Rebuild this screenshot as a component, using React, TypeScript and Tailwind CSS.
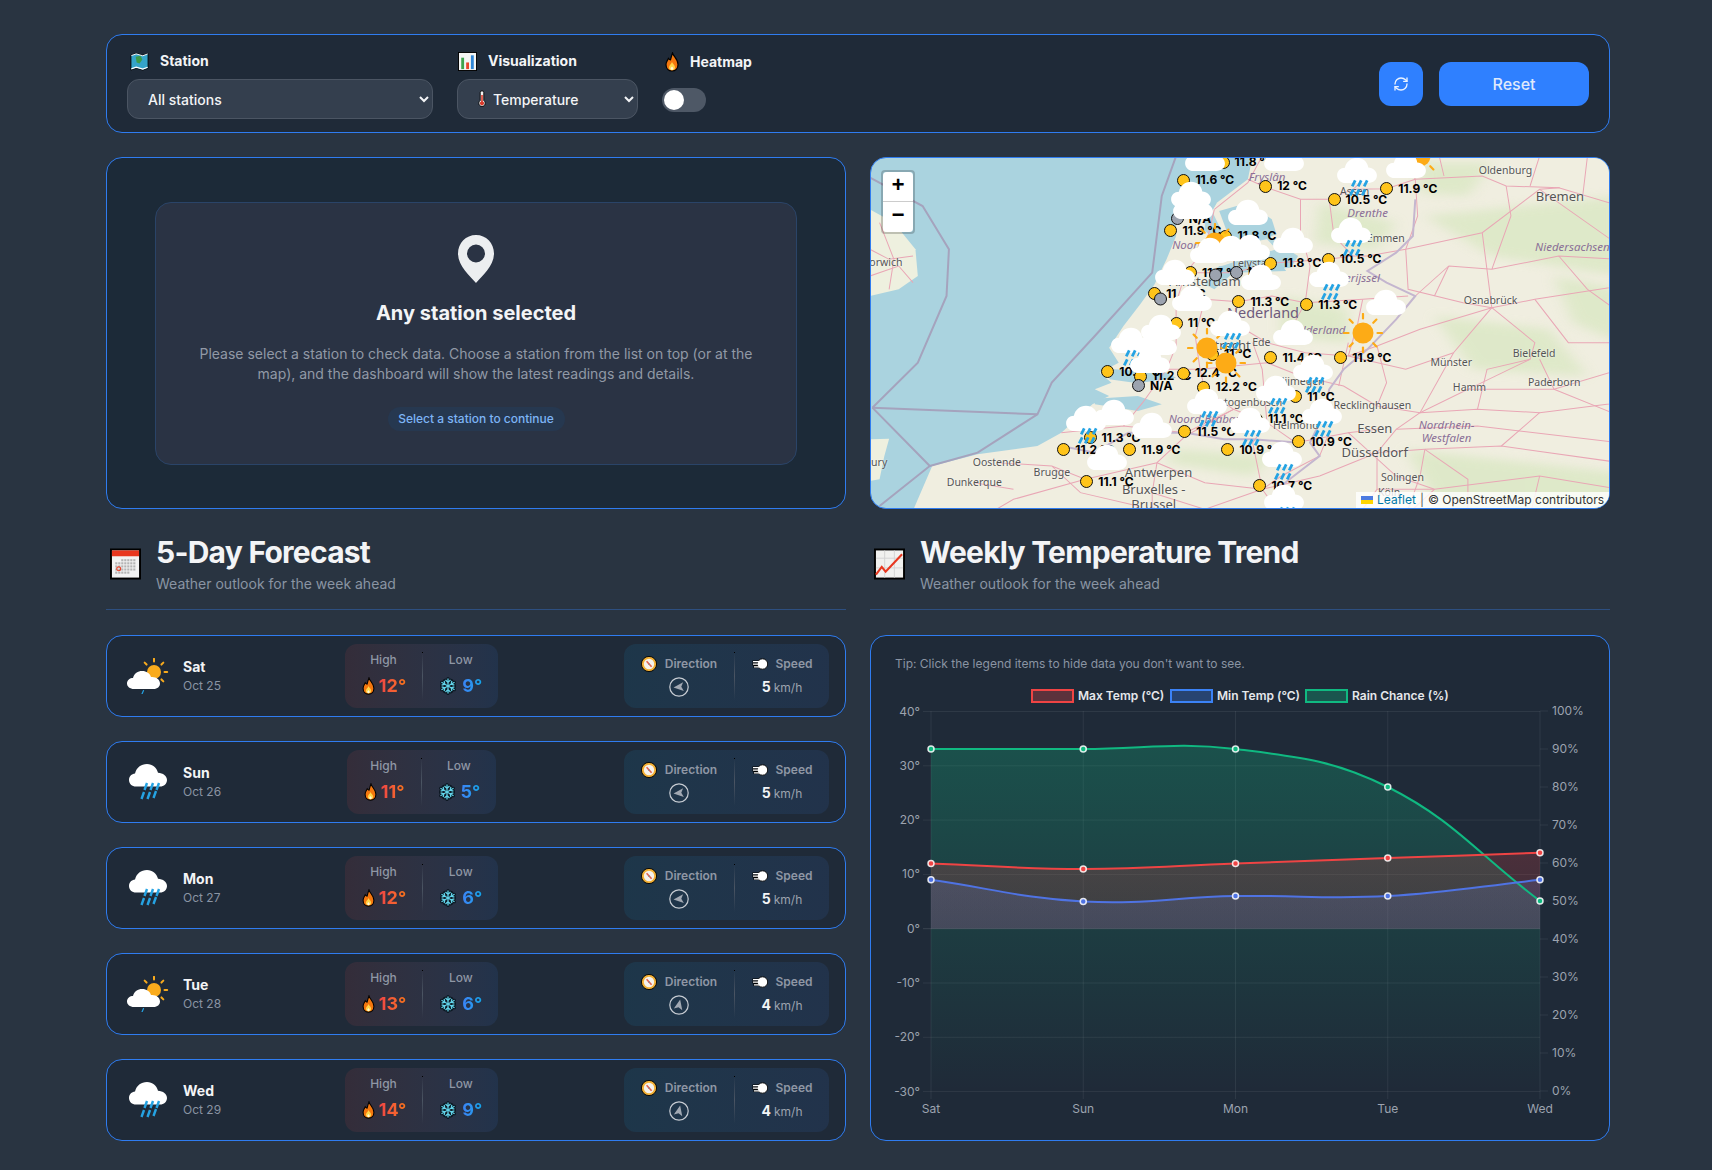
import { RefreshCw } from "lucide-react";

type Day = {
  day: string;
  date: string;
  high: number;
  low: number;
  speed: number;
  sunny: boolean;
  heading: number;
};

const days: Day[] = [
  { day: "Sat", date: "Oct 25", high: 12, low: 9, speed: 5, sunny: true, heading: -95 },
  { day: "Sun", date: "Oct 26", high: 11, low: 5, speed: 5, sunny: false, heading: -95 },
  { day: "Mon", date: "Oct 27", high: 12, low: 6, speed: 5, sunny: false, heading: -95 },
  { day: "Tue", date: "Oct 28", high: 13, low: 6, speed: 4, sunny: true, heading: 12 },
  { day: "Wed", date: "Oct 29", high: 14, low: 9, speed: 4, sunny: false, heading: 12 },
];

// map items are in a 1568x1080 grid that covers the 750x360 map box
const mx = (x: number) => x / 2.09 - 1;
const my = (y: number) => y / 3 - 2;

const stations: [number, number, string][] = [
  [738, 18, "11.8 °C"], [656, 73, "11.6 °C"], [827, 90, "12 °C"], [1080, 98, "11.9 °C"],
  [970, 131, "10.5 °C"], [642, 188, "N/A"], [629, 224, "11.9 °C"], [744, 240, "11.8 °C"],
  [838, 322, "11.8 °C"], [958, 310, "10.5 °C"], [670, 350, "11.7 °C"], [723, 356, ""],
  [766, 348, "N/A"], [595, 413, "11.4 °C"], [608, 428, ""], [771, 437, "11.3 °C"],
  [913, 446, "11.3 °C"], [640, 502, "11 °C"], [838, 605, "11.4 °C"], [984, 605, "11.9 °C"],
  [716, 594, "11 °C"], [497, 647, "10.8 °C"], [566, 660, "11.2 °C"], [655, 652, "12.4 °C"],
  [561, 689, "N/A"], [698, 694, "12.2 °C"], [890, 722, "11 °C"], [808, 790, "11.1 °C"],
  [658, 827, "11.5 °C"], [460, 845, "11.3 °C"], [405, 881, "11.2 °C"], [543, 881, "11.9 °C"],
  [748, 881, "10.9 °C"], [896, 857, "10.9 °C"], [453, 977, "11.1 °C"], [815, 989, "10.7 °C"],
];

const grayStations = [642, 723, 766, 608, 561];

const clouds: [number, number, boolean][] = [
  [700, 10, false], [865, 10, false], [1018, 45, true], [1120, 30, false], [670, 118, false],
  [675, 152, false], [790, 170, false], [885, 255, false], [1005, 225, true], [710, 285, false],
  [755, 280, false], [795, 275, false], [638, 350, false], [818, 365, false], [960, 358, true],
  [672, 430, false], [1078, 442, false], [608, 515, false], [752, 505, true], [885, 530, false],
  [545, 555, true], [600, 560, false], [585, 615, false], [925, 635, true], [848, 700, true],
  [705, 738, true], [945, 768, true], [452, 790, true], [510, 770, false], [590, 810, false],
  [795, 795, true], [862, 898, true], [495, 905, false], [866, 1025, true],
];

const suns: [number, number][] = [[705, 575], [745, 620], [1030, 530], [1150, 0], [722, 262]];

const placeLabels: [number, number, string, string][] = [
  [1328, 45, "Oldenburg", "g"], [1442, 123, "Bremen", "b"], [1468, 273, "Niedersachsen", "p"],
  [1297, 435, "Osnabrück", "g"], [1215, 620, "Münster", "g"], [1388, 595, "Bielefeld", "g"],
  [1253, 697, "Hamm", "g"], [1430, 680, "Paderborn", "g"], [1050, 750, "Recklinghausen", "g"],
  [1055, 818, "Essen", "b"], [1205, 806, "Nordrhein-", "p"], [1205, 847, "Westfalen", "p"],
  [1055, 890, "Düsseldorf", "b"], [1113, 967, "Solingen", "g"], [265, 920, "Oostende", "g"],
  [380, 952, "Brugge", "g"], [218, 980, "Dunkerque", "g"], [603, 952, "Antwerpen", "b"],
  [593, 1003, "Bruxelles -", "b"], [593, 1048, "Brussel", "b"], [830, 62, "Fryslân", "p"],
  [1040, 172, "Drenthe", "p"], [1078, 248, "Emmen", "g"], [1013, 108, "Assen", "g"],
  [800, 325, "Lelystad", "g"], [700, 378, "Amsterdam", "b"], [818, 560, "Ede", "g"],
  [748, 570, "Utrecht", "b"], [890, 810, "Helmond", "g"], [771, 740, "'s-Hertogenbosch", "g"],
  [705, 788, "Noord-Brabant", "p"], [900, 678, "Nijmegen", "g"], [665, 268, "Noord", "p"],
  [935, 522, "Gelderland", "p"], [1015, 365, "Overijssel", "p"], [25, 320, "Norwich", "g"],
  [12, 920, "Bury", "g"], [1085, 1012, "Köln", "g"],
];

const roads = [
  "M790,70 L830,95 L900,130 L960,130 L1010,100 L1080,98 L1140,70 L1280,60 L1330,90 L1440,95 L1568,150",
  "M1120,0 L1140,70 L1145,180 L1120,280 L1125,400 L1240,440 L1300,455 L1390,430 L1568,390",
  "M720,160 L790,80 L820,0 M900,130 L900,230 L920,330 L910,440 L880,520",
  "M960,130 L970,240 L1010,300 L1040,300 L1120,280 L1280,230 L1400,100 L1442,95",
  "M770,437 L840,420 L910,440 L1030,430 L1125,420",
  "M640,440 L700,430 L770,437 L760,500 L830,560 L910,590 L1000,600 L1060,570 L1150,520 L1300,455",
  "M700,430 L680,540 L690,640 L700,700 L760,760 L830,800 L890,860 L1000,830 L1060,820",
  "M620,640 L690,640 L830,620 L900,660 L990,690 L1060,750 L1150,770 L1250,700 L1430,700 L1568,640",
  "M1300,455 L1220,590 L1150,770 L1100,820 L1060,890 L1060,1000 L1020,1080",
  "M1150,770 L1270,760 L1400,770 L1568,740 M1250,700 L1380,610 L1390,560 L1300,455",
  "M1430,700 L1400,610 M1430,700 L1568,780 M1100,820 L1270,810 L1568,860",
  "M1060,890 L1160,880 L1320,870 L1568,920 M1060,1000 L1180,1000 L1400,960 L1568,1000",
  "M600,920 L660,840 L760,760 M600,920 L700,980 L820,1000 L940,960 L1060,890",
  "M600,920 L590,1010 L590,1080 M600,920 L450,970 L380,930 L265,920 M380,930 L440,1010 L560,1050",
  "M450,970 L300,1030 L240,1080 M218,980 L300,1000 M590,1010 L700,1060 L820,1000",
  "M400,830 L530,810 L660,830 L760,760 M530,810 L570,740 L620,640 L640,570 L640,440",
  "M640,440 L660,350 L700,280 L720,160 M660,350 L760,350 L838,322 L958,310 L1010,300",
  "M0,280 L40,310 L90,300 M0,360 L60,330 L90,380 M20,200 L50,310 L40,400",
  "M800,560 L820,640 L830,800 L800,860 L820,1000 M1000,600 L1020,500 L1030,430",
  "M1120,1080 L1150,960 L1160,880 M1280,230 L1300,455 M1400,100 L1568,270",
  "M960,830 L940,900 L860,960 L820,1000 M1000,830 L1100,960 L1180,1000",
  "M1210,330 L1300,340 L1440,300 L1568,310 M1210,330 L1180,420 M1300,340 L1340,180 L1330,90",
  "M1440,300 L1500,400 L1568,470 M1390,430 L1460,560 L1568,560 M1220,590 L1120,640 L1000,600",
  "M1270,760 L1290,640 L1380,610 M1320,870 L1400,770 M1160,880 L1250,970 L1250,1080",
  "M1400,960 L1380,1080 M1180,1000 L1120,1080 M820,1000 L860,1080 M700,1060 L720,1080",
  "M1040,60 L1010,100 M1190,0 L1200,60 M1400,0 L1380,90 M1500,0 L1490,120",
  "M980,690 L1000,560 M1060,570 L1080,680 L1060,750 M1140,420 L1210,330",
];

const borders = [
  "M0,65 L110,150 L165,280 L160,420 L100,620 L5,755",
  "M5,755 L125,930 L20,1050",
  "M125,930 L225,890 L350,775 L380,680 L470,540 L590,350 L610,120 L640,0",
  "M5,755 L350,775",
];

const landBorders =
  "M1140,130 L1135,240 L1100,290 L1040,345 L1080,380 L1140,420 L1100,490 L1040,580 L990,640 L960,700 L950,770 L920,860 L940,900 L850,1000 L860,1080";
const belgianBorder = "M400,870 L470,890 L540,830 L660,830 L740,850 L800,850 L900,860";

function Flame({ className = "h-[18px] w-[15px]" }: { className?: string }) {
  return (
    <svg viewBox="0 0 16 20" className={className}>
      <path d="M8.5 1C9.3 4.5 14 7 14 12.5 14 16.5 11.4 19 8 19S2 16.5 2 12.5C2 9.8 3.5 8.6 4.4 6.4 5.2 7.4 5.8 8 6.4 8 7 6 7.6 3.5 8.5 1Z" fill="#f4770e" stroke="#000" strokeWidth="1.2" />
      <path d="M8 10C8.6 12 11 13 11 15.4 11 17.2 9.7 18.2 8 18.2S5 17.2 5 15.4C5 13.4 7.2 12.4 8 10Z" fill="#ffd54a" />
      <path d="M8 14.5C8.5 15.4 9.4 15.8 9.4 16.7 9.4 17.4 8.7 17.9 8 17.9S6.6 17.4 6.6 16.7C6.6 15.8 7.6 15.4 8 14.5Z" fill="#fff8d8" />
    </svg>
  );
}

function Snowflake() {
  const arms = [0, 60, 120, 180, 240, 300];
  return (
    <svg viewBox="-10 -10 20 20" className="size-[18px]">
      {arms.map((angle) => (
        <g key={angle} transform={`rotate(${angle})`} stroke="#0b1620" strokeWidth="3.4" fill="none" strokeLinecap="round">
          <path d="M0 0V-8.2M-2.8 -6.6L0 -4 2.8 -6.6" />
        </g>
      ))}
      {arms.map((angle) => (
        <g key={angle} transform={`rotate(${angle})`} stroke="#62d4ea" strokeWidth="1.4" fill="none">
          <path d="M0 0V-8.4M-2.8 -6.6L0 -4 2.8 -6.6" />
        </g>
      ))}
    </svg>
  );
}

function CompassEmoji() {
  return (
    <svg viewBox="-8 -8 16 16" className="size-4">
      <circle r="7.6" fill="#f2b035" stroke="#000" strokeWidth="0.9" />
      <circle r="5.2" fill="#f5f2ec" />
      <path d="M-2.4 -2.8L2.6 2.8" stroke="#e0614f" strokeWidth="1.6" />
      <path d="M-1 1L1 -1" stroke="#8d97a3" strokeWidth="0.9" />
    </svg>
  );
}

function DashEmoji() {
  return (
    <svg viewBox="0 0 16 14" className="h-[14px] w-4">
      <path d="M0.5 4.6H9M0.5 7.2H8M1.5 9.8H9" stroke="#000" strokeWidth="2.4" />
      <circle cx="10.5" cy="7" r="5.2" fill="#fff" stroke="#000" strokeWidth="0.9" />
      <path d="M1 4.6H9M1 7.2H9M2 9.800H9" stroke="#fff" strokeWidth="1.2" />
    </svg>
  );
}

function MapEmoji() {
  return (
    <svg viewBox="0 0 20 20" className="size-[19px]">
      <path d="M1 3.5L6.5 1.5 13.5 3.5 19 1.5V17L13.5 19 6.5 17 1 19Z" fill="#35a4c9" stroke="#000" strokeWidth="0.9" />
      <path d="M6 5L11 4 13 8 10 12 7 11Z" fill="#3d9a47" />
      <path d="M1.4 17.8L6.5 16 13.5 18 18.6 16" fill="none" stroke="#fff" strokeWidth="1.2" />
      <path d="M1.4 3.8L6.5 2 13.5 4 18.6 2" fill="none" stroke="#fff" strokeWidth="1" />
    </svg>
  );
}

function BarsEmoji() {
  return (
    <svg viewBox="0 0 20 20" className="size-[19px]">
      <rect x="0.5" y="0.5" width="19" height="19" fill="#f4f5f4" stroke="#000" />
      <rect x="3.4" y="6" width="3" height="12" fill="#3fa34d" />
      <rect x="8.6" y="11" width="3" height="7" fill="#e8452c" />
      <rect x="13.6" y="3.5" width="3" height="14.5" fill="#2f86d6" />
    </svg>
  );
}

function Thermometer() {
  return (
    <svg viewBox="0 0 8 18" className="h-[18px] w-2">
      <path d="M2.2 2.6a1.8 1.8 0 0 1 3.6 0V10.6a3.2 3.2 0 1 1-3.6 0Z" fill="#f3f3f3" stroke="#000" strokeWidth="0.9" />
      <path d="M3.2 5H4.8V11.4a2.1 2.1 0 1 1-1.6 0Z" fill="#d93a2b" />
    </svg>
  );
}

function CalendarEmoji() {
  const cells: number[][] = [];
  for (let r = 0; r < 5; r++) for (let c = 0; c < 7; c++) if (!(r === 0 && c < 2) && !(r === 4 && c > 4)) cells.push([c, r]);
  return (
    <svg viewBox="0 0 32 32" className="h-8 w-[31px] shrink-0">
      <rect x="1" y="1" width="30" height="30" fill="#f2f2f2" stroke="#000" strokeWidth="2" />
      <rect x="2" y="2" width="28" height="6" fill="#e8371f" />
      {cells.map(([c, r]) => (
        <rect key={`${c}-${r}`} x={5.4 + c * 3.1} y={11 + r * 3.2} width="2.2" height="2.2" fill="#b4b4b4" />
      ))}
      <circle cx="9" cy="21" r="2" fill="none" stroke="#e8452c" strokeWidth="1.2" />
    </svg>
  );
}

function TrendEmoji() {
  return (
    <svg viewBox="0 0 32 32" className="h-8 w-[31px] shrink-0">
      <rect x="1" y="1" width="30" height="30" fill="#f1f1ef" stroke="#000" strokeWidth="2" />
      <path d="M2 10H30M2 20H30M11 2V30M21 2V30" stroke="#d4d4d4" strokeWidth="1" />
      <path d="M2 27L8 19 12 24 29 6" fill="none" stroke="#e8371f" strokeWidth="2.2" />
    </svg>
  );
}

function RainDashes() {
  return (
    <path d="M13 0L10 6M19 0L16 6M25 0L22 6M11 9L8 15M17 9L14 15M23 9L20 15" stroke="#25a3e3" strokeWidth="2.8" fill="none" />
  );
}

const cloudPath =
  "M10 30C4 30 0 26 0 21 0 16 4 12.5 9 12.5 10.5 5.5 16 1 23 1 30 1 35 5.5 36 12 41.5 12.5 46 16 46 21.5 46 26.5 42 30 36 30Z";

function DayIcon({ sunny }: { sunny: boolean }) {
  if (sunny) {
    return (
      <svg viewBox="0 0 42 36" className="h-9 w-[42px]">
        <circle cx="27" cy="14" r="7" fill="#f9ab1d" />
        {[0, 45, 90, 135, 180, 270, 315].map((angle) => (
          <path key={angle} d="M27 3.5V0.8" transform={`rotate(${angle} 27 14)`} stroke="#f9ab1d" strokeWidth="2" strokeLinecap="round" />
        ))}
        <path d="M7 31C3 31 0 28.500 0 25.500 0 22 3 20 6 20 7 15.500 11 13 15 13 19.500 13 23 15.500 24 19 29 18.500 33 21.500 33 25.500 33 28.500 30.500 31 26.500 31Z" fill="#fff" />
        <path d="M16.500 32.500L15 36" stroke="#25a3e3" strokeWidth="1.2" strokeLinecap="round" />
      </svg>
    );
  }
  return (
    <svg viewBox="0 0 42 40" className="h-10 w-[42px]">
      <g transform="translate(2 0)">
        <path d="M7 24.500C3 24.500 0 21.800 0 18 0 14.600 2.600 12 6 11.600 7.400 5.600 12 2 18 2 23.500 2 27.800 5.500 29 10.800 34 11 38 14 38 18 38 21.800 35 24.500 31 24.500Z" fill="#fff" />
        <path d="M18 21L15.500 28M24 21L21.500 28M30 21L27.500 28M15 30L12.500 37M21 30L18.500 37M27 29L24.500 36" stroke="#25a3e3" strokeWidth="2.400" />
      </g>
    </svg>
  );
}

function Divider() {
  return (
    <div className="relative my-2 w-px self-stretch bg-linear-to-b from-transparent via-[#4b5563] to-transparent">
      <div className="absolute left-0 top-0 size-px bg-black" />
    </div>
  );
}

function ForecastCard({ item }: { item: Day }) {
  return (
    <div className="grid h-[82px] grid-cols-[198px_201px_1fr] items-center rounded-2xl border border-[#2f7cf0] bg-[#1f2a38] px-4">
      <div className="flex items-center gap-[14px] pl-1">
        <DayIcon sunny={item.sunny} />
        <div className="-mt-px">
          <div className="text-sm font-bold leading-5 text-[#f3f4f6]">{item.day}</div>
          <div className="mt-px text-xs leading-4 text-[#8a94a3]">{item.date}</div>
        </div>
      </div>

      <div className="flex justify-center">
        <div className="flex h-16 rounded-xl bg-linear-to-r from-[#ef4444]/10 to-[#3b82f6]/10">
          <div className="flex flex-col items-center px-4 pt-2">
            <span className="text-xs font-medium leading-4 text-[#8f97a5]">High</span>
            <div className="mt-[5px] flex items-center gap-[3px]">
              <Flame />
              <span className="bg-linear-to-r from-[#ef4444] to-[#f97316] bg-clip-text text-lg font-bold leading-[26px] text-transparent">{item.high}°</span>
            </div>
          </div>
          <Divider />
          <div className="flex flex-col items-center px-4 pt-2">
            <span className="text-xs font-medium leading-4 text-[#8f97a5]">Low</span>
            <div className="mt-[5px] flex items-center gap-[5px]">
              <Snowflake />
              <span className="bg-linear-to-r from-[#3b82f6] to-[#0ea5e9] bg-clip-text text-lg font-bold leading-[26px] text-transparent">{item.low}°</span>
            </div>
          </div>
        </div>
      </div>

      <div className="flex justify-end">
        <div className="flex h-16 w-[205px] rounded-xl bg-linear-to-r from-[#0ea5e9]/10 to-[#3b82f6]/10">
          <div className="flex w-[110px] flex-col items-center pt-3">
            <div className="flex items-center gap-2">
              <CompassEmoji />
              <span className="text-xs font-semibold leading-4 text-[#8f97a5]">Direction</span>
            </div>
            <svg viewBox="-10 -10 20 20" className="mt-[5px] size-5">
              <circle r="9.2" fill="none" stroke="#c7ccd3" strokeWidth="1.2" />
              <path d="M0 -5.500L4.300 4.500 0 2.300-4.300 4.500Z" fill="#a2a9b3" transform={`rotate(${item.heading})`} />
            </svg>
          </div>
          <Divider />
          <div className="flex flex-1 flex-col items-center pt-3">
            <div className="flex items-center gap-2">
              <DashEmoji />
              <span className="text-xs font-semibold leading-4 text-[#8f97a5]">Speed</span>
            </div>
            <div className="mt-[5px] flex items-baseline gap-[3px] leading-5">
              <span className="text-sm font-bold text-[#f3f4f6]">{item.speed}</span>
              <span className="text-xs text-[#9ca3af]">km/h</span>
            </div>
          </div>
        </div>
      </div>
    </div>
  );
}

function SectionHeader({ title, icon }: { title: string; icon: React.ReactNode }) {
  return (
    <div className="mb-[25px] mt-[25px] flex items-center gap-[15px] border-b border-[#2d4f80] pb-[15px] pl-1">
      {icon}
      <div>
        <h2 className="text-3xl font-bold leading-9 tracking-tight text-[#f3f4f6]">{title}</h2>
        <p className="mt-1 text-sm leading-5 text-[#8a94a3]">Weather outlook for the week ahead</p>
      </div>
    </div>
  );
}

function Sun({ x, y }: { x: number; y: number }) {
  return (
    <svg viewBox="-20 -20 40 40" className="absolute h-10 w-10 -translate-x-1/2 -translate-y-1/2" style={{ left: mx(x), top: my(y) }}>
      <circle r="10.500" fill="#fdab16" />
      {[0, 45, 90, 135, 180, 225, 270, 315].map((angle) => (
        <path key={angle} d="M0 -14.500V-19" transform={`rotate(${angle})`} stroke="#fdab16" strokeWidth="2.200" strokeLinecap="round" />
      ))}
    </svg>
  );
}

function MapPanel() {
  return (
    <div className="relative h-[352px] overflow-hidden rounded-2xl border border-[#2f7cf0] bg-[#aad3df]">
      <svg viewBox="0 0 1568 1080" preserveAspectRatio="none" className="absolute -left-px -top-0.5 h-[360px] w-[750px]">
        <defs>
          <filter id="soft">
            <feGaussianBlur stdDeviation="14" />
          </filter>
        </defs>
        <path d="M800,0 L790,70 L725,140 L715,165 L700,130 L660,115 L640,175 L640,240 L620,310 L595,385 L565,445 L530,510 L500,575 L520,620 L480,650 L505,680 L470,700 L500,720 L465,745 L400,830 L350,870 L225,895 L130,930 L85,1080 L1568,1080 L1568,0 Z" fill="#f0eee0" />
        <path d="M0,160 L50,200 L95,280 L100,360 L60,400 L0,420 Z" fill="#eef0df" />
        <path d="M0,850 L40,848 L30,900 L20,970 L0,975 Z" fill="#eef0df" />
        <g filter="url(#soft)" fill="#d5e6bd" opacity="0.65">
          <path d="M1160,180 L1568,120 L1568,360 L1300,300 Z" />
          <path d="M1180,480 L1420,520 L1500,660 L1260,640 Z" />
          <path d="M1120,880 L1568,950 L1568,1080 L1200,1080 Z" />
          <path d="M940,140 L1100,200 L1060,280 L930,260 Z" />
          <path d="M860,420 L1000,460 L1000,560 L860,540 Z" />
          <path d="M640,880 L840,900 L800,960 L620,920 Z" />
          <path d="M1430,360 L1568,400 L1568,560 L1470,500 Z" />
          <path d="M1150,20 L1300,20 L1250,120 L1150,110 Z" />
        </g>
        <path d="M725,140 L715,165 L740,240 L770,260 L830,240 L895,300 L880,335 L805,345 L740,330 L715,340 L800,300 L850,280 L830,250 L790,260 L740,270 L700,225 L700,170 Z" fill="#aad3df" opacity="0.9" />
        <path d="M730,165 L790,140 L840,190 L850,235 L800,260 L755,260 Z" fill="#aad3df" />
        <path d="M730,330 L860,325 L870,345 L760,350 L720,400 L700,385 Z" fill="#aad3df" />
        <path d="M510,640 L620,650 L640,665 L560,682 L500,670 Z" fill="#aad3df" />
        <path d="M470,728 L560,720 L610,745 L560,765 L470,745 Z" fill="#aad3df" />
        {roads.map((d) => (
          <path key={d} d={d} fill="none" stroke="#e9a6b5" strokeWidth="1" vectorEffect="non-scaling-stroke" />
        ))}
        {borders.map((d) => (
          <path key={d} d={d} fill="none" stroke="#a5a3bd" strokeWidth="2" vectorEffect="non-scaling-stroke" />
        ))}
        <path d={landBorders} fill="none" stroke="#c4b6cf" strokeWidth="2" vectorEffect="non-scaling-stroke" />
        <path d={belgianBorder} fill="none" stroke="#c4b6cf" strokeWidth="2" vectorEffect="non-scaling-stroke" />
      </svg>

      {placeLabels.map(([x, y, label, kind]) => (
        <span
          key={label}
          className={
            kind === "p"
              ? "absolute -translate-x-1/2 -translate-y-1/2 whitespace-nowrap font-[family-name:'Noto_Sans',sans-serif] text-[11.5px] italic text-[#8a6f97]"
              : kind === "b"
                ? "absolute -translate-x-1/2 -translate-y-1/2 whitespace-nowrap font-[family-name:'Noto_Sans',sans-serif] text-[13px] text-[#555] [text-shadow:0_0_2px_#fff]"
                : "absolute -translate-x-1/2 -translate-y-1/2 whitespace-nowrap font-[family-name:'Noto_Sans',sans-serif] text-[10.5px] text-[#555] [text-shadow:0_0_2px_#fff]"
          }
          style={{ left: mx(x), top: my(y) }}
        >
          {label}
        </span>
      ))}
      <span className="absolute left-[356px] top-[155px] -translate-y-1/2 whitespace-nowrap font-[family-name:'Noto_Sans',sans-serif] text-[14.5px] text-[#6e5a7c]">Nederland</span>

      {stations.map(([x, y, label]) => (
        <div key={`${x}-${y}`} className="absolute flex -translate-y-1/2 items-center gap-[5px]" style={{ left: mx(x) - 6.5, top: my(y) }}>
          <span className={grayStations.includes(x) ? "size-[13px] shrink-0 rounded-full border border-[#111] bg-[#9ca3af]" : "size-[13px] shrink-0 rounded-full border border-[#111] bg-[#ffc41a]"} />
          <span className="whitespace-nowrap text-xs font-bold leading-4 text-black">{label}</span>
        </div>
      ))}

      {suns.map(([x, y]) => (
        <Sun key={`${x}-${y}`} x={x} y={y} />
      ))}

      {clouds.map(([x, y, rain]) => (
        <svg key={`${x}-${y}`} viewBox="0 0 46 52" className="absolute h-[45px] w-[40px] -translate-x-1/2" style={{ left: mx(x), top: my(y) - 14 }}>
          <path d={cloudPath} fill="#fff" />
          {rain && (
            <g transform="translate(6 27) scale(1.15)">
              <RainDashes />
            </g>
          )}
        </svg>
      ))}

      <div className="absolute left-[10px] top-[12px] w-[34px] rounded border-2 border-black/20 bg-clip-padding">
        <div className="flex h-[30px] items-center justify-center rounded-t-sm border-b border-[#ccc] bg-white font-[family-name:'Liberation_Mono',monospace] text-[22px] font-bold leading-none text-black">+</div>
        <div className="flex h-[30px] items-center justify-center rounded-b-sm bg-white font-[family-name:'Liberation_Mono',monospace] text-[22px] font-bold leading-none text-black">−</div>
      </div>

      <div className="absolute bottom-0 right-0 flex items-center bg-white/80 px-[5px] text-xs leading-4 text-[#333]">
        <svg viewBox="0 0 12 8" className="mr-1 h-2 w-3">
          <rect width="12" height="4" fill="#4C7BE1" />
          <rect y="4" width="12" height="4" fill="#FFD500" />
        </svg>
        <span className="text-[#0078a8]">Leaflet</span>
        <span className="mx-1 text-[#555]">|</span>
        <span>© OpenStreetMap contributors</span>
      </div>
    </div>
  );
}

const chartX = [931, 1083.25, 1235.5, 1387.75, 1540];
const tempY = (t: number) => 927.7 - t * 5.43;
const rainY = (p: number) => 1090 - p * 3.8;

// same spline as chart.js with tension 0.4
function spline(ys: number[]) {
  const pts = ys.map((y, i) => ({ x: chartX[i], y }));
  const ctrl = pts.map((p, i) => {
    const prev = pts[Math.max(i - 1, 0)];
    const next = pts[Math.min(i + 1, pts.length - 1)];
    const d01 = Math.hypot(p.x - prev.x, p.y - prev.y);
    const d12 = Math.hypot(next.x - p.x, next.y - p.y);
    const total = d01 + d12 || 1;
    const fa = (0.4 * d01) / total;
    const fb = (0.4 * d12) / total;
    return {
      px: p.x - fa * (next.x - prev.x),
      py: p.y - fa * (next.y - prev.y),
      nx: p.x + fb * (next.x - prev.x),
      ny: p.y + fb * (next.y - prev.y),
    };
  });
  let d = `M${pts[0].x},${pts[0].y}`;
  for (let i = 1; i < pts.length; i++) {
    d += ` C${ctrl[i - 1].nx},${ctrl[i - 1].ny} ${ctrl[i].px},${ctrl[i].py} ${pts[i].x},${pts[i].y}`;
  }
  return { d, pts };
}

const series = [
  { name: "rain", color: "#10b981", base: 1090, ...spline([90, 90, 90, 80, 50].map(rainY)) },
  { name: "max", color: "#ef4444", base: 927.7, ...spline([12, 11, 12, 13, 14].map(tempY)) },
  { name: "min", color: "#4f73e3", base: 927.7, ...spline([9, 5, 6, 6, 9].map(tempY)) },
];

const legend = [
  { x: 1032, w: 41, fill: "#ef4444", label: "Max Temp (°C)" },
  { x: 1171, w: 41, fill: "#3b82f6", label: "Min Temp (°C)" },
  { x: 1306, w: 41, fill: "#10b981", label: "Rain Chance (%)" },
];

function TrendChart() {
  return (
    <svg viewBox="872 680 737 450" width="737" height="450" className="ml-px mt-[9px] block">
      <defs>
        <linearGradient id="fill-rain" gradientUnits="userSpaceOnUse" x1="0" y1="710" x2="0" y2="1090">
          <stop offset="0" stopColor="#10b981" stopOpacity="0.3" />
          <stop offset="1" stopColor="#10b981" stopOpacity="0" />
        </linearGradient>
        <linearGradient id="fill-max" gradientUnits="userSpaceOnUse" x1="0" y1="840" x2="0" y2="930">
          <stop offset="0" stopColor="#ef4444" stopOpacity="0.22" />
          <stop offset="1" stopColor="#ef4444" stopOpacity="0.14" />
        </linearGradient>
        <linearGradient id="fill-min" gradientUnits="userSpaceOnUse" x1="0" y1="860" x2="0" y2="930">
          <stop offset="0" stopColor="#6f7fcc" stopOpacity="0.22" />
          <stop offset="1" stopColor="#6f7fcc" stopOpacity="0.18" />
        </linearGradient>
      </defs>

      {legend.map((item) => (
        <g key={item.label}>
          <rect x={item.x} y="689" width={item.w} height="12" fill={item.fill} fillOpacity="0.3" stroke={item.fill} strokeWidth="2" />
          <text x={item.x + item.w + 5} y="699" fontSize="12" fontWeight="600" fill="#e5e7eb">{item.label}</text>
        </g>
      ))}

      {[40, 30, 20, 10, 0, -10, -20, -30].map((t) => (
        <g key={t}>
          <path d={`M923 ${tempY(t)}H1540`} stroke="#fff" strokeOpacity={t === 0 ? 0.12 : 0.07} />
          <text x="920" y={tempY(t) + 4} fontSize="12" fill="#9ca3af" textAnchor="end">{t}°</text>
        </g>
      ))}
      {chartX.map((x, i) => (
        <g key={x}>
          <path d={`M${x} 710V1098`} stroke="#fff" strokeOpacity="0.07" />
          <text x={x} y="1112" fontSize="12" fill="#9ca3af" textAnchor="middle">{days[i].day}</text>
        </g>
      ))}
      {[100, 90, 80, 70, 60, 50, 40, 30, 20, 10, 0].map((p) => (
        <g key={p}>
          <path d={`M1540 ${rainY(p)}H1548`} stroke="#fff" strokeOpacity="0.07" />
          <text x="1552" y={rainY(p) + 4} fontSize="12" fill="#9ca3af">{p}%</text>
        </g>
      ))}

      {series.map((s) => (
        <path key={s.name} d={`${s.d} L1540,${s.base} L931,${s.base} Z`} fill={`url(#fill-${s.name})`} />
      ))}
      {series.map((s) => (
        <path key={s.name} d={s.d} fill="none" stroke={s.color} strokeWidth="2" />
      ))}
      {series.map((s) =>
        s.pts.map((p) => (
          <circle key={`${s.name}-${p.x}`} cx={p.x} cy={p.y} r="3" fill={s.color} stroke="#fff" strokeOpacity="0.85" strokeWidth="1.500" />
        )),
      )}
    </svg>
  );
}

export default function App() {
  return (
    <div className="min-h-[1170px] bg-[#293441] pb-[29px] pl-[106px] pr-[102px] pt-[34px] font-[family-name:Inter,sans-serif] text-[#f3f4f6]">
      <div className="flex h-[99px] items-center justify-between rounded-2xl border border-[#2f7cf0] bg-[#1f2a38] px-5">
        <div className="flex gap-6 self-start pt-4">
          <div className="w-[306px]">
            <div className="mb-2 flex h-5 items-center gap-[11px] pl-[3px]">
              <MapEmoji />
              <span className="text-sm font-bold">Station</span>
            </div>
            <select className="h-10 w-full rounded-xl border border-[#4b5563] bg-[#343f4e] px-4 text-sm font-medium text-[#f3f4f6]">
              <option>All stations</option>
            </select>
          </div>
          <div className="relative w-[181px]">
            <div className="mb-2 flex h-5 items-center gap-[11px] pl-[1px]">
              <BarsEmoji />
              <span className="text-sm font-bold">Visualization</span>
            </div>
            <select className="h-10 w-full rounded-xl border border-[#4b5563] bg-[#343f4e] pl-[31px] pr-1 text-sm font-medium text-[#f3f4f6]">
              <option>Temperature</option>
            </select>
            <div className="absolute left-[21px] top-[39px]">
              <Thermometer />
            </div>
          </div>
          <div>
            <div className="mt-px flex h-5 items-center gap-[10px] pl-[2px]">
              <Flame className="h-5 w-4" />
              <span className="text-sm font-bold">Heatmap</span>
            </div>
            <div className="mt-4 h-6 w-11 rounded-full bg-[#4e5866] p-0.5">
              <div className="size-5 rounded-full bg-white" />
            </div>
          </div>
        </div>
        <div className="flex items-center gap-4">
          <button className="flex size-11 items-center justify-center rounded-xl bg-[#2f80ff] text-[#eaf2ff]">
            <RefreshCw className="size-4" strokeWidth={2} />
          </button>
          <button className="flex h-11 w-[150px] items-center justify-center rounded-xl bg-[#2f80ff] text-base font-medium leading-none text-[#dfe9fb]">Reset</button>
        </div>
      </div>

      <div className="mt-6 grid grid-cols-[740px_1fr] gap-x-6">
        <div className="flex h-[352px] rounded-2xl border border-[#2f7cf0] bg-[#1c2a38] px-12 pb-[43px] pt-11">
          <div className="flex flex-1 flex-col items-center rounded-2xl border border-[#2a4468] bg-[#2a3344] pt-[32px] text-center">
            <svg viewBox="0 0 36 48" className="h-12 w-9">
              <path fillRule="evenodd" d="M18 0C8 0 0 8 0 18.500 0 31 12 41 18 48 24 41 36 31 36 18.500 36 8 28 0 18 0ZM18 9.500A9 9 0 1 1 18 27.500 9 9 0 1 1 18 9.500Z" fill="#eceef0" />
            </svg>
            <h3 className="mt-4 text-xl font-bold leading-7 text-[#f3f4f6]">Any station selected</h3>
            <p className="mt-[17px] max-w-[570px] text-sm leading-5 text-[#9199a6]">
              Please select a station to check data. Choose a station from the list on top (or at the map), and the dashboard will show the latest readings and details.
            </p>
            <div className="mt-[23px] flex h-6 w-[177px] items-center justify-center rounded-full bg-[#263850] text-xs font-medium text-[#7db4f5]">Select a station to continue</div>
          </div>
        </div>
        <MapPanel />

        <div>
          <SectionHeader title="5-Day Forecast" icon={<CalendarEmoji />} />
          <div className="flex flex-col gap-6">
            {days.map((item) => (
              <ForecastCard key={item.day} item={item} />
            ))}
          </div>
        </div>
        <div className="flex flex-col">
          <SectionHeader title="Weekly Temperature Trend" icon={<TrendEmoji />} />
          <div className="flex-1 rounded-2xl border border-[#2f7cf0] bg-[#1f2a38]">
            <p className="pl-6 pt-5 text-xs leading-4 text-[#8a94a3]">Tip: Click the legend items to hide data you don&apos;t want to see.</p>
            <TrendChart />
          </div>
        </div>
      </div>
    </div>
  );
}
